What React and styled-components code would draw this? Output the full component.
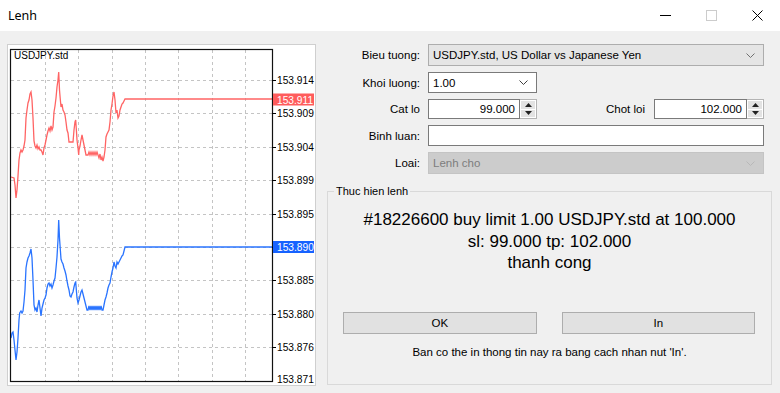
import React from "react";
import styled, { createGlobalStyle } from "styled-components";

const GlobalStyle = createGlobalStyle`
	html, body {
		margin: 0;
		padding: 0;
		background: #f0f0f0;
	}
	* {
		box-sizing: border-box;
	}
`;

const FONT = `"Liberation Sans", Arial, sans-serif`;

const RED_POINTS =
	"11,177 14,178 15,185 16,198 17,190 18,176 19,160 20,153 21,150 22,152 23,150 24,146 25,140 26,118 27,110 28,103 29,100 30,94 31,92 32,100 33,118 34,141 35,146 36,148 37,145 38,149 39,147 40,150 41,150 42,152 43,155 44,148 45,145 46,140 47,135 48,131 49,128 50,131 51,126 52,130 53,127 54,112 55,106 56,98 57,87 58,80 58.7,72 59.5,90 60,96 61,107 62,104 63,110 64,112 65,115 66,122 67,130 68,133 69,142 70,142 71,142 72,142 73,142 74,130 75,122 75.7,120 76.5,132 77,140 78,148 78.7,155 79,150 80,146 81,140 82,135 83,140 84,145 85,150 86,155 88,155 89,152 90,155 91,152 92,155 93,152 94,155 95,152 96,155 97,152 98,155 99,158 100,154 101,160 102,157 103,161 104,157 105,150 106,137 107,134 108,132 109,130 110,122 111,110 112,104 113,96 114,92 115,100 116,113 117,110 118,118 119,116 120,110 121,107 122,104 123,103 124,101 125,99 272,99";

const BLUE_POINTS =
	"11,338 12,333 13,332 14,340 15,350 16,360 17,352 18,338 19,320 19.7,313 21,311 22,313 23,311 24,302 25,290 26,268 27,262 28,258 29,256 30,253 31,249 32,258 33,280 34,305 35,310 36,308 37,312 38,305 39,300 40,308 41,316 42,308 43,304 44,300 45,298 46,295 47,288 48,284 49,283 50,286 51,284 52,288 53,285 54,281 55,278 56,268 57,257 58,240 58.7,220 59.5,238 60,245 61,259 62,262 63,264 64,268 65,271 66,275 67,281 68,286 69,290 70,296 71,297 72,294 73,292 74,287 75,283 75.7,282 76.5,292 77,298 78,303 79,300 80,296 81,292 82,290 83,294 84,298 85,302 86,306 87,310 88,310 89,306 90,310 91,306 92,310 93,306 94,310 95,306 96,310 97,306 98,310 99,306 100,310 101,306 102,310 103,310 104,305 105,300 106,297 107,293 108,288 109,285 110,283 111,277 112,272 113,268 114,262 115,266 116,268 117,262 118,264 119,262 120,260 121,258 122,256 123,255 124,251 125,247 272,247";

const GRID_X = [45, 78, 112, 145, 178, 212, 245];
const PRICE_ROWS = [
	{ y: 80, label: "153.914" },
	{ y: 113, label: "153.909" },
	{ y: 147, label: "153.904" },
	{ y: 180, label: "153.899" },
	{ y: 214, label: "153.895" },
	{ y: 247, label: "153.890", hidden: true },
	{ y: 280, label: "153.885" },
	{ y: 314, label: "153.880" },
	{ y: 347, label: "153.876" },
];

const Chevron = ({ color = "#606060" }) => (
	<svg width='9' height='5' viewBox='0 0 9 5'>
		<polyline points='0.5,0.5 4.5,4.5 8.5,0.5' fill='none' stroke={color} strokeWidth='1' />
	</svg>
);

const ChartDrawing = () => (
	<svg width='307' height='340' viewBox='8 45 307 340'>
		<rect x='8' y='45' width='307' height='340' fill='#fff' />
		{GRID_X.map((x) => (
			<line key={x} x1={x + 0.5} y1='50' x2={x + 0.5} y2='381' stroke='#c4c4c4' strokeDasharray='3,3' />
		))}
		{PRICE_ROWS.map((r) => (
			<line key={r.y} x1='11' y1={r.y + 0.5} x2='272' y2={r.y + 0.5} stroke='#c4c4c4' strokeDasharray='3,3' />
		))}
		<polyline points={RED_POINTS} fill='none' stroke='#ff6464' strokeWidth='1.3' strokeLinejoin='miter' />
		<polyline points={BLUE_POINTS} fill='none' stroke='#2a74ff' strokeWidth='1.3' strokeLinejoin='miter' />
		<rect x='10.5' y='49.5' width='262' height='332' fill='none' stroke='#111' strokeWidth='1.2' />
		<text x='14' y='59' fontFamily={FONT} fontSize='10' fill='#000'>
			USDJPY.std
		</text>
		{PRICE_ROWS.map((r) => (
			<g key={"t" + r.y}>
				<line x1='272' y1={r.y + 0.5} x2='276' y2={r.y + 0.5} stroke='#000' />
				{!r.hidden && (
					<text x='277' y={r.y + 4} fontFamily={FONT} fontSize='10.2' fill='#000'>
						{r.label}
					</text>
				)}
			</g>
		))}
		<text x='277' y='383' fontFamily={FONT} fontSize='10.2' fill='#000'>
			153.871
		</text>
		<rect x='273' y='93.5' width='41' height='12' fill='#ff5c5c' />
		<text x='277' y='103.5' fontFamily={FONT} fontSize='10.2' fill='#fff'>
			153.911
		</text>
		<rect x='273' y='241' width='41' height='12' fill='#1662ff' />
		<text x='277' y='251' fontFamily={FONT} fontSize='10.2' fill='#fff'>
			153.890
		</text>
	</svg>
);

const Spinner = () => (
	<SpinBox>
		<SpinHalf>
			<svg width='7' height='4' viewBox='0 0 7 4'>
				<polygon points='0,4 3.5,0 7,4' fill='#222' />
			</svg>
		</SpinHalf>
		<SpinHalf $bottom>
			<svg width='7' height='4' viewBox='0 0 7 4'>
				<polygon points='0,0 3.5,4 7,0' fill='#222' />
			</svg>
		</SpinHalf>
	</SpinBox>
);

const App = () => {
	return (
		<>
			<GlobalStyle />
			<Window>
				<TitleBar>
					<Title>Lenh</Title>
					<Controls>
						<CtrlButton>
							<svg width='11' height='1' viewBox='0 0 11 1'>
								<rect width='11' height='1' fill='#000' />
							</svg>
						</CtrlButton>
						<CtrlButton>
							<svg width='11' height='11' viewBox='0 0 11 11'>
								<rect x='0.5' y='0.5' width='10' height='10' fill='none' stroke='#cccccc' />
							</svg>
						</CtrlButton>
						<CtrlButton>
							<svg width='11' height='11' viewBox='0 0 11 11'>
								<path d='M0.5,0.5 L10.5,10.5 M10.5,0.5 L0.5,10.5' stroke='#000' strokeWidth='1' />
							</svg>
						</CtrlButton>
					</Controls>
				</TitleBar>

				<Body>
					<ChartPanel>
						<ChartDrawing />
					</ChartPanel>

					<Side>
						<Form>
							<Label $h={22}>Bieu tuong:</Label>
							<Select $h={22} $variant='gray'>
								<span>USDJPY.std, US Dollar vs Japanese Yen</span>
								<Chevron color='#707070' />
							</Select>

							<Label $h={21}>Khoi luong:</Label>
							<Cell>
								<Select $h={21} $w={109}>
									<span>1.00</span>
									<Chevron color='#404040' />
								</Select>
							</Cell>

							<Label $h={20}>Cat lo</Label>
							<Cell>
								<NumberField $w={109}>
									<NumberInput>99.000</NumberInput>
									<Spinner />
								</NumberField>
								<InlineLabel>Chot loi</InlineLabel>
								<NumberField $w={110}>
									<NumberInput>102.000</NumberInput>
									<Spinner />
								</NumberField>
							</Cell>

							<Label $h={21}>Binh luan:</Label>
							<TextBox />

							<Label $h={22}>Loai:</Label>
							<Select $h={22} $variant='disabled'>
								<span>Lenh cho</span>
								<Chevron color='#b8b8b8' />
							</Select>
						</Form>

						<GroupBox>
							<Legend>Thuc hien lenh</Legend>
							<ResultText>
								#18226600 buy limit 1.00 USDJPY.std at 100.000
								<br />
								sl: 99.000 tp: 102.000
								<br />
								thanh cong
							</ResultText>
							<Buttons>
								<Button>OK</Button>
								<Button>In</Button>
							</Buttons>
							<Hint>Ban co the in thong tin nay ra bang cach nhan nut 'In'.</Hint>
						</GroupBox>
					</Side>
				</Body>
			</Window>
		</>
	);
};

export default App;

const Window = styled.div`
	width: 780px;
	height: 393px;
	background: #f0f0f0;
	display: flex;
	flex-direction: column;
	font-family: ${FONT};
	color: #000;
	overflow: hidden;
`;

const TitleBar = styled.div`
	height: 31px;
	background: #fff;
	display: flex;
	align-items: center;
	justify-content: space-between;
	padding-left: 8px;
`;

const Title = styled.div`
	font-family: "Noto Sans", "Open Sans", sans-serif;
	font-size: 12.5px;
`;

const Controls = styled.div`
	display: flex;
	height: 100%;
`;

const CtrlButton = styled.div`
	width: 46px;
	height: 100%;
	display: flex;
	align-items: center;
	justify-content: center;
`;

const Body = styled.div`
	display: flex;
	padding: 13px 0 0 7px;
`;

const ChartPanel = styled.div`
	width: 309px;
	height: 342px;
	border: 1px solid #cfcfcf;
	background: #fff;
	display: flex;

	svg {
		display: block;
	}
`;

const Side = styled.div`
	width: 445px;
	margin-left: 11px;
	display: flex;
	flex-direction: column;
`;

const Form = styled.div`
	display: grid;
	grid-template-columns: 93px 336px;
	column-gap: 8px;
	row-gap: 6px;
	font-size: 11.5px;
`;

const Label = styled.div`
	height: ${(p) => p.$h}px;
	display: flex;
	align-items: center;
	justify-content: flex-end;
`;

const Cell = styled.div`
	display: flex;
	align-items: center;
`;

const Select = styled.div`
	height: ${(p) => p.$h}px;
	width: ${(p) => (p.$w ? `${p.$w}px` : "100%")};
	display: flex;
	align-items: center;
	justify-content: space-between;
	padding: 0 8px 0 4px;
	background: ${(p) =>
		p.$variant === "gray" ? "#e5e5e5" : p.$variant === "disabled" ? "#cccccc" : "#fff"};
	border: 1px solid
		${(p) =>
			p.$variant === "gray" ? "#adadad" : p.$variant === "disabled" ? "#c4c4c4" : "#7a7a7a"};
	color: ${(p) => (p.$variant === "disabled" ? "#7d7d7d" : "#000")};

	svg {
		display: block;
	}
`;

const NumberField = styled.div`
	width: ${(p) => p.$w}px;
	height: 20px;
	display: flex;
`;

const NumberInput = styled.div`
	flex: 1;
	height: 100%;
	background: #fff;
	border: 1px solid #7a7a7a;
	display: flex;
	align-items: center;
	justify-content: flex-end;
	padding-right: 4px;
`;

const SpinBox = styled.div`
	width: 17px;
	height: 100%;
	display: flex;
	flex-direction: column;
	border: 1px solid #b4b4b4;
	border-left: none;
	background: #fff;
	padding: 1px;
`;

const SpinHalf = styled.div`
	flex: 1;
	background: #e3e3e3;
	border-top: ${(p) => (p.$bottom ? "1px solid #ffffff" : "none")};
	display: flex;
	align-items: center;
	justify-content: center;

	svg {
		display: block;
	}
`;

const InlineLabel = styled.div`
	flex: 1;
	text-align: right;
	margin-right: 9px;
`;

const TextBox = styled.div`
	height: 21px;
	background: #fff;
	border: 1px solid #7a7a7a;
`;

const GroupBox = styled.div`
	position: relative;
	margin-top: 17px;
	height: 194px;
	border: 1px solid #d9d9d9;
	display: flex;
	flex-direction: column;
	padding-top: 17px;
`;

const Legend = styled.div`
	position: absolute;
	top: -7px;
	left: 6px;
	padding: 0 2px;
	background: #f0f0f0;
	font-size: 11px;
	line-height: 13px;
`;

const ResultText = styled.div`
	text-align: center;
	font-size: 17px;
	line-height: 21.7px;
`;

const Buttons = styled.div`
	display: grid;
	grid-template-columns: 1fr 1fr;
	column-gap: 25px;
	padding: 0 16px 0 15px;
	margin-top: 38px;
`;

const Button = styled.div`
	height: 22px;
	background: #e1e1e1;
	border: 1px solid #adadad;
	display: flex;
	align-items: center;
	justify-content: center;
	font-size: 11.5px;
`;

const Hint = styled.div`
	margin-top: 12px;
	text-align: center;
	font-size: 11.5px;
	line-height: 13px;
`;
